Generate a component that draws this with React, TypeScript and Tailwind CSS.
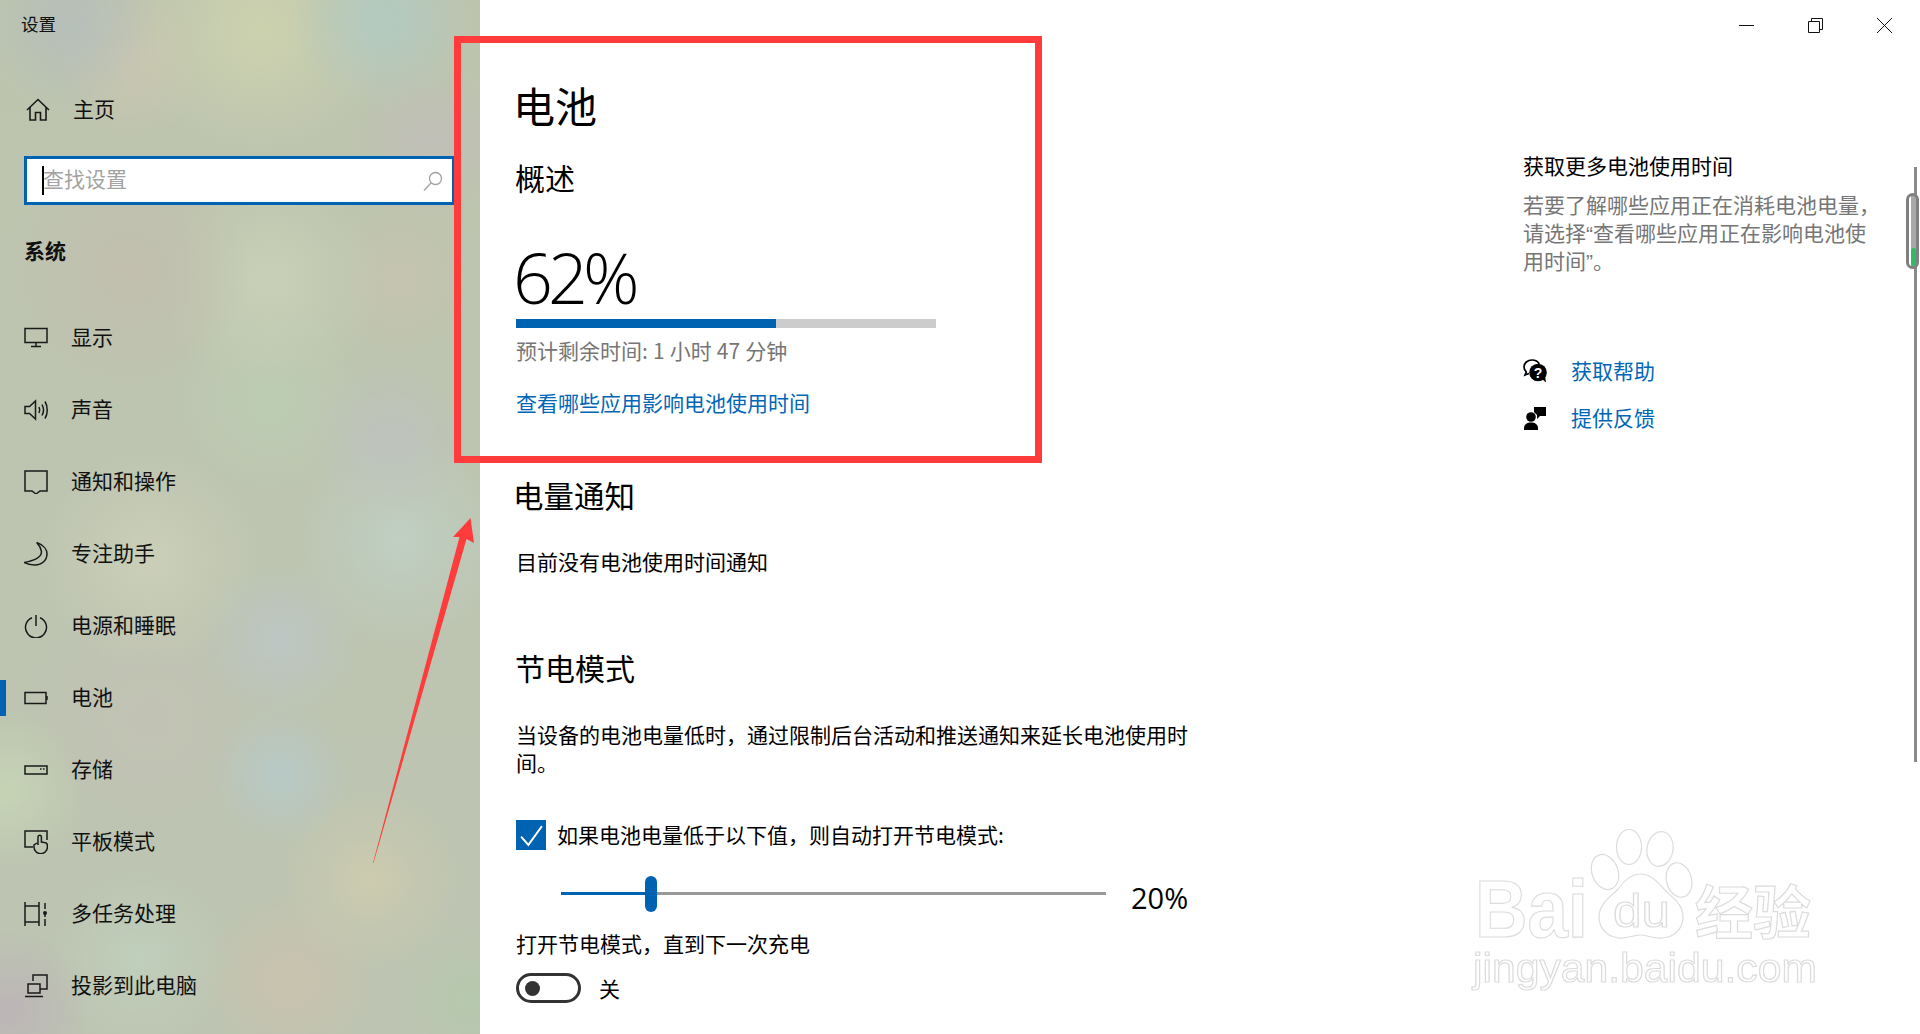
import React from "react";

const S = ({ children, cls = "" }: { children: React.ReactNode; cls?: string }) => (
  <svg viewBox="0 0 24 24" fill="none" stroke="#1a1a1a" strokeWidth="1.5" className={"w-6 h-6 shrink-0 " + cls}>
    {children}
  </svg>
);

const nav: { t: string; icon: React.ReactNode; active?: boolean }[] = [
  { t: "显示", icon: <S><path d="M1 2.500h22v14H1z" /><path d="M12 16.500v4M7 20.500h10" /></S> },
  { t: "声音", icon: <S><path d="M1 8.500h4.500L11.500 3v18l-6-5.500H1z" /><path d="M15 9c1 2 1 4 0 6M18 6.500c2 3.500 2 7.500 0 11M21 3.500c3 5 3 12 0 17" /></S> },
  { t: "通知和操作", icon: <S><path d="M1 1h22v20h-7l-4 3-4-3H1z" /></S> },
  { t: "专注助手", icon: <S><path d="M12.700 .5C20 3 23 8 23 12 23 18 18 23 11 23 6.500 23 2.500 22 0 20.500 7 19 17.500 17 17.500 9.500 17 6 15 3 12.700 .5z" /></S> },
  { t: "电源和睡眠", icon: <S><path d="M12 1v11" /><path d="M8 3.700a10.500 10.500 0 1 0 8 0" /></S> },
  { t: "电池", active: true, icon: <S><path d="M1 6.500h21v11H1z" /><path d="M23 10v4" /></S> },
  { t: "存储", icon: <S><path d="M1 8h22v8H1z" /><path d="M16 11h1.500M19 11h1.500" /></S> },
  { t: "平板模式", icon: <S><path d="M9 17H1V1h22v9" /><path d="M14 15V7a1.700 1.700 0 0 1 3.400 0v5l3 .5a3 3 0 0 1 3 3V17a6.700 6.700 0 0 1-13.400 0v-2l3-2" /></S> },
  { t: "多任务处理", icon: <S><path d="M1 0v4h14V0M1 24v-4h14v4M1 4v16M15 4v16" /><path d="M21 1v6M21 17v7M21 10v5" /><circle cx="21" cy="11" r="2" fill="#1a1a1a" stroke="none" /></S> },
  { t: "投影到此电脑", icon: <S><path d="M9 7V1h14v14h-7" /><path d="M4 10h12v9H4zM1 22.500h18" /></S> },
];

const Wall =
  "bg-[radial-gradient(circle_at_383px_20px,#b2cac1_0,transparent_90px),radial-gradient(circle_at_260px_30px,#ccd2ae_0,transparent_130px),radial-gradient(circle_at_70px_25px,#b6bfba_0,transparent_90px),radial-gradient(circle_at_130px_60px,#cac6b0_0,transparent_80px),radial-gradient(circle_at_430px_140px,#c1bfb8_0,transparent_80px),radial-gradient(circle_at_130px_270px,#c2bfaf_0,transparent_120px),radial-gradient(circle_at_270px_280px,#c8d1b6_0,transparent_110px),radial-gradient(circle_at_400px_280px,#c5c4af_0,transparent_80px),radial-gradient(circle_at_390px_440px,#bec3bd_0,transparent_80px),radial-gradient(circle_at_270px_400px,#bccdb4_0,transparent_100px),radial-gradient(circle_at_280px_640px,#bcc6c3_0,transparent_80px),radial-gradient(circle_at_280px_775px,#b7c9c6_0,transparent_70px),radial-gradient(circle_at_150px_560px,#cbcfb8_0,transparent_110px),radial-gradient(circle_at_400px_540px,#bfcfc2_0,transparent_110px),radial-gradient(circle_at_150px_720px,#c2c2b4_0,transparent_130px),radial-gradient(circle_at_5px_790px,#c6d4b5_0,transparent_80px),radial-gradient(circle_at_370px_880px,#cccbae_0,transparent_90px),radial-gradient(circle_at_290px_980px,#c9c2ad_0,transparent_90px),radial-gradient(circle_at_10px_1010px,#bcb5b7_0,transparent_80px),radial-gradient(circle_at_470px_1000px,#b5c8ae_0,transparent_80px),radial-gradient(circle_at_140px_960px,#bfcfbb_0,transparent_90px),linear-gradient(#bdc4ae,#bdc4b2)]";

export default function App() {
  return (
    <div className="relative flex h-[1034px] w-[1920px] overflow-hidden bg-white text-[21px] leading-[28px] text-black font-['Noto_Sans_CJK_SC','Noto_Sans',sans-serif]">
      {/* Sidebar */}
      <aside className={"w-[480px] shrink-0 flex flex-col text-[#111] " + Wall}>
        <div className="h-[50px] pl-[21px] pb-[2px] flex items-center text-[17.500px]">设置</div>
        <div className="mt-6 h-[72px] pl-[26px] flex items-center gap-[23px]">
          <svg viewBox="0 0 24 24" fill="none" stroke="#1a1a1a" strokeWidth="1.600" className="w-[24px] h-[24px] shrink-0">
            <path d="M1 12 12 1.500 23 12M4 9.500V22h5.500v-7.500h5V22H20V9.500" />
          </svg>
          <span className="pb-[5px]">主页</span>
        </div>
        <div className="mt-[10px] ml-6 w-[431px] h-[49px] bg-white border-[3px] border-[#0063b1] flex items-center pl-[15px] pr-[9px]">
          <span className="w-[2px] h-[29px] bg-black -mr-[1px] shrink-0" />
          <span className="text-[#a3a3a3] flex-1 pb-[6px]">查找设置</span>
          <svg viewBox="0 0 20 20" fill="none" stroke="#a0a0a0" strokeWidth="1.300" className="w-[20px] h-[20px]">
            <circle cx="12.500" cy="7.500" r="6" />
            <path d="M8 12 1 19.500" />
          </svg>
        </div>
        <div className="mt-[29px] h-9 pl-6 pb-[4px] flex items-center font-bold">系统</div>
        <nav className="mt-[32px] flex flex-col">
          {nav.map((n) => (
            <div key={n.t} className="relative h-[72px] pl-6 flex items-center gap-[23px]">
              {n.active && <span className="absolute left-0 top-[18px] w-[6px] h-9 bg-[#0063b1]" />}
              {n.icon}
              <span className="pb-[5px]">{n.t}</span>
            </div>
          ))}
        </nav>
      </aside>

      {/* Main */}
      <main className="flex-1 flex justify-between">
        <section className="pl-[36px] pt-[78px] w-[720px] flex flex-col">
          <h1 className="h-[54px] leading-[54px] text-[42px] -ml-[3px]">电池</h1>
          <h2 className="mt-[25px] h-10 leading-10 text-[30px] -ml-[1px]">概述</h2>
          <div className="mt-[40px] h-20 leading-[80px] text-[70px] font-light -ml-[3px] tracking-[-5px] font-['Open_Sans',sans-serif]">62%</div>
          <div className="mt-[2px] w-[420px] h-[9px] bg-[#ccc]">
            <div className="h-full w-[260px] bg-[#0063b1]" />
          </div>
          <p className="mt-[8px] text-[#767676] [word-spacing:0.400px]">预计剩余时间: 1 小时 47 分钟</p>
          <a className="mt-[24px] text-[#0067b8]">查看哪些应用影响电池使用时间</a>
          <h2 className="mt-[59px] h-10 leading-10 text-[30.500px] -ml-[3px]">电量通知</h2>
          <p className="mt-[32px]">目前没有电池使用时间通知</p>
          <h2 className="mt-[72px] h-10 leading-10 text-[30px] -ml-[1px]">节电模式</h2>
          <p className="mt-[33px] w-[680px]">当设备的电池电量低时，通过限制后台活动和推送通知来延长电池使用时间。</p>
          <div className="mt-[44px] flex items-center gap-[11px]">
            <span className="w-[30px] h-[30px] bg-[#0063b1] flex items-center justify-center">
              <svg viewBox="0 0 24 24" fill="none" stroke="#fff" strokeWidth="1.800" className="w-[25px] h-[25px]">
                <path d="M2 13l7 8L22 3" />
              </svg>
            </span>
            <span className="pb-[2px]">如果电池电量低于以下值，则自动打开节电模式:</span>
          </div>
          <div className="mt-[25px] pl-[45px] flex items-center h-9">
            <div className="relative w-[545px] h-[3px] bg-[#999]">
              <div className="h-full w-[86px] bg-[#0063b1]" />
              <span className="absolute left-[84px] -top-[16px] w-3 h-9 rounded-full bg-[#0063b1]" />
            </div>
            <span className="ml-[25px] mt-[10px] text-[29px] font-['Open_Sans',sans-serif]">20%</span>
          </div>
          <p className="mt-[18px]">打开节电模式，直到下一次充电</p>
          <div className="mt-[16px] flex items-center gap-[18px]">
            <span className="w-[65px] h-[30px] rounded-full border-[3px] border-[#333] flex items-center pl-[6px]">
              <span className="w-[15px] h-[15px] rounded-full bg-[#333]" />
            </span>
            <span>关</span>
          </div>
        </section>

        <section className="w-[397px] flex flex-col">
          <div className="h-[50px] flex items-center justify-end pr-[28px] gap-[54px] text-[#111]">
            <svg viewBox="0 0 15 15" stroke="#111" fill="none" className="w-[15px] h-[15px]"><path d="M0 7.500h15" /></svg>
            <svg viewBox="0 0 15 15" stroke="#111" fill="none" className="w-[15px] h-[15px]"><path d="M.5 3.500h11v11H.5zM3.500 3.500v-3h11v11h-3" /></svg>
            <svg viewBox="0 0 15 15" stroke="#111" fill="none" className="w-[15px] h-[15px]"><path d="M0 0l15 15M15 0L0 15" /></svg>
          </div>
          <div className="mt-[101px]">获取更多电池使用时间</div>
          <div className="mt-[11px] text-[#767676] whitespace-nowrap">
            <div className="h-7">若要了解哪些应用正在消耗电池电量，</div>
            <div className="h-7">请选择<span className="font-['Liberation_Sans']">“</span>查看哪些应用正在影响电池使</div>
            <div className="h-7">用时间<span className="font-['Liberation_Sans']">”</span>。</div>
          </div>
          <div className="mt-[82px] flex items-center gap-[24px] text-[#0067b8]">
            <svg viewBox="0 0 24 24" className="w-6 h-6 shrink-0">
              <path d="M9 1C4.500 1 1 4 1 8c0 2 1 3.700 2.300 5L2 16l4-1.500" fill="none" stroke="#000" strokeWidth="1.700" />
              <path d="M9 1c3.500 0 6 1.500 7.300 4" fill="none" stroke="#000" strokeWidth="1.700" />
              <circle cx="15" cy="13.500" r="8.800" fill="#000" />
              <path d="M19 20l4 3.500-1-7z" fill="#000" />
              <text x="15" y="18.500" textAnchor="middle" fontSize="14" fontWeight="700" fill="#fff" fontFamily="Liberation Sans">?</text>
            </svg>
            <span className="pb-[2px]">获取帮助</span>
          </div>
          <div className="mt-[17px] flex items-center gap-[24px] text-[#0067b8]">
            <svg viewBox="0 0 24 24" className="w-6 h-6 shrink-0">
              <circle cx="8" cy="11" r="4.800" fill="#000" />
              <path d="M1 24v-2c0-3.500 3-5.500 7-5.500s7 2 7 5.500v2z" fill="#000" />
              <path d="M11 1h12v9h-6l-3 3v-4l-3-3z" fill="#000" />
            </svg>
            <span className="pb-[2px]">提供反馈</span>
          </div>
        </section>
      </main>

      {/* Scrollbar */}
      <div className="absolute left-[1914px] top-[167px] w-[3px] h-[595px] bg-[#8a8a8a]" />
      <div className="absolute left-[1906px] top-[193px] w-[13px] h-[76px] rounded-full border-[3px] border-[#808080] bg-[linear-gradient(90deg,#fff_0,#fff_35%,#a8a8a8_35%,#a8a8a8_100%)]">
        <div className="absolute left-[2px] top-[52px] w-[5px] h-[18px] rounded-full bg-[#2dbb6a]" />
      </div>

      {/* Annotation: red box */}
      <div className="absolute left-[454px] top-[36px] w-[588px] h-[427px] border-[7px] border-[#ff3b3b]" />

      {/* Annotation: arrow */}
      <svg className="absolute left-[360px] top-[510px] w-[120px] h-[360px]" viewBox="360 510 120 360">
        <path d="M470.500 518 474 543 466.500 539 373.500 863 373 863 459.500 537 453 537z" fill="#ff3b3b" />
      </svg>

      {/* Watermark */}
      <svg className="absolute left-[1460px] top-[825px] w-[370px] h-[180px] blur-[0.6px]" viewBox="1460 825 370 180" fill="#fff" stroke="#dcdcdc" strokeWidth="1.200">
        <ellipse cx="1605" cy="872" rx="13" ry="18" transform="rotate(-20 1605 872)" />
        <ellipse cx="1629" cy="847" rx="12.500" ry="17.500" />
        <ellipse cx="1660" cy="849" rx="13" ry="17.500" transform="rotate(10 1660 849)" />
        <ellipse cx="1679" cy="880" rx="12.500" ry="17.500" transform="rotate(-15 1679 880)" />
        <path d="M1640 874c-10 0-17 8-22 15-6 7-19 14-19 28 0 12 9 20 20 21 8 1 14-3 21-3s14 4 23 3c11-1 20-9 20-21 0-14-12-20-20-29-6-7-13-14-23-14z" />
        <text x="1475" y="937" fontSize="82" fontWeight="700" fontFamily="Liberation Sans" textLength="113" lengthAdjust="spacingAndGlyphs">Bai</text>
        <text x="1613" y="927" fontSize="46" fontFamily="Liberation Sans" textLength="57" lengthAdjust="spacingAndGlyphs">du</text>
        <text x="1695" y="934" fontSize="58" fontWeight="700" fontFamily="Noto Sans CJK SC">经验</text>
        <text x="1473" y="982" fontSize="41" fontFamily="Liberation Sans" textLength="344" lengthAdjust="spacingAndGlyphs">jingyan.baidu.com</text>
      </svg>
    </div>
  );
}
